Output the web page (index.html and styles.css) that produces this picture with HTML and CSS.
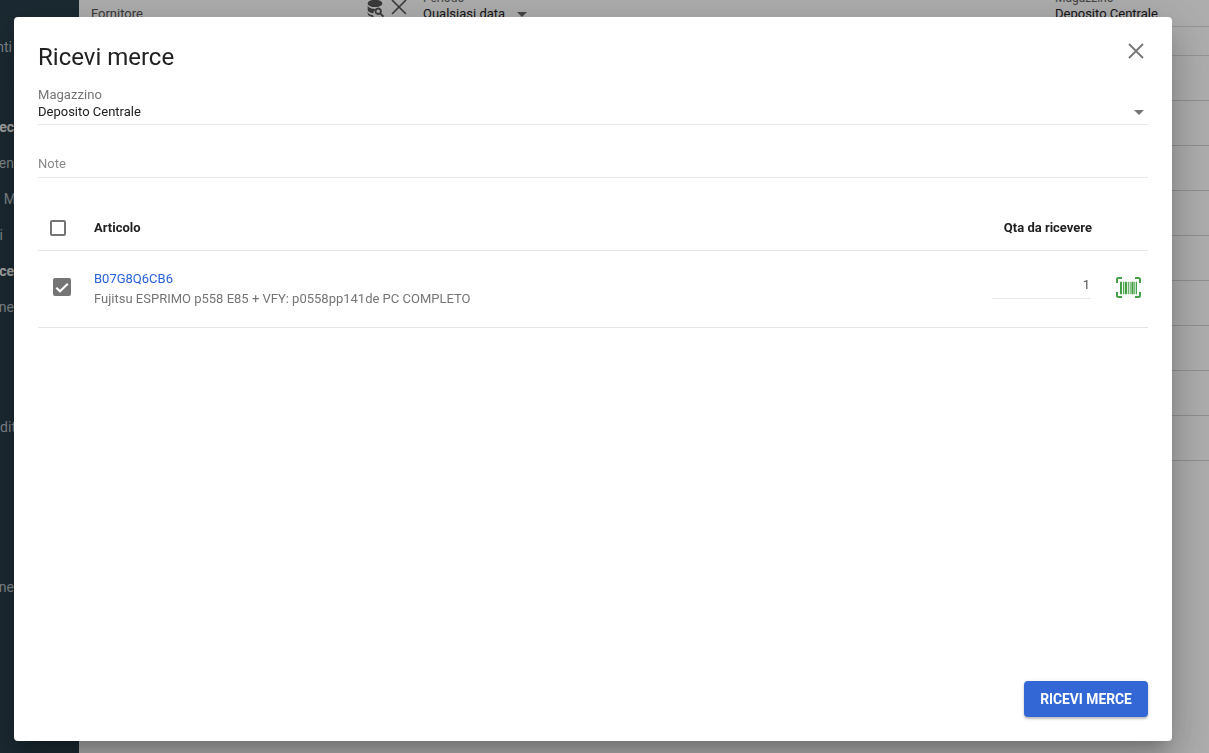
FILE: index.html
```html
<!DOCTYPE html>
<html lang="it">
<head>
<meta charset="utf-8">
<title>Ricevi merce</title>
<link rel="stylesheet" href="styles.css">
</head>
<body>
<div class="app">
  <nav class="sidebar">
    <div class="nav-item first">nti</div>
    <div class="nav-item strong sec">pec</div>
    <div class="nav-item">en</div>
    <div class="nav-item over">M</div>
    <div class="nav-item far">i</div>
    <div class="nav-item strong">ce</div>
    <div class="nav-item">ne</div>
    <div class="nav-item gap-a">dit</div>
    <div class="nav-item gap-b">ne</div>
  </nav>
  <main class="main">
    <div class="filters">
      <div class="filter f-supplier"><span class="placeholder">Fornitore</span></div>
      <div class="filter-icons">
        <svg class="fi-db" viewBox="0 0 24 24" width="22" height="22"><path d="M4 7c0-2.200 3.600-4 8-4s8 1.800 8 4-3.600 4-8 4-8-1.800-8-4zM4 9c0 2.200 3.600 4 8 4 .7 0 1.300 0 2-.1-2.300 1-3.800 2.800-4 5-3.300-.4-6-1.900-6-3.900zM4 16c0 1.900 2.500 3.400 5.900 3.900.2.800.6 1.500 1.100 2.100-3.900-.3-7-2-7-4z"/><path d="M15.500 11.500a4 4 0 0 1 3.400 6.100l3 3-1.400 1.400-3-3a4 4 0 1 1-2-7.500zm0 2a2 2 0 1 0 0 4 2 2 0 0 0 0-4z"/></svg>
        <svg class="fi-x" viewBox="0 0 16 16" width="16" height="16"><path d="M1 1l14 14M15 1L1 15"/></svg>
      </div>
      <div class="filter f-period">
        <span class="mini">Periodo</span>
        <span class="value">Qualsiasi data<i class="caret dark"></i></span>
      </div>
      <div class="filter f-store">
        <span class="mini">Magazzino</span>
        <span class="value">Deposito Centrale</span>
      </div>
    </div>
    <div class="gap-row"></div>
    <div class="row"></div><div class="row"></div><div class="row"></div><div class="row"></div>
    <div class="row"></div><div class="row"></div><div class="row"></div><div class="row"></div>
    <div class="row"></div>
  </main>
</div>

<div class="overlay"></div>

<section class="dialog" role="dialog" aria-label="Ricevi merce">
  <header class="dialog-head">
    <h1>Ricevi merce</h1>
    <button class="close" aria-label="Chiudi">
      <svg viewBox="0 0 16 16" width="16" height="16"><path d="M1 1l14 14M15 1L1 15"/></svg>
    </button>
  </header>

  <div class="field select">
    <label>Magazzino</label>
    <div class="select-value">Deposito Centrale<i class="caret"></i></div>
  </div>
  <div class="field note"><span>Note</span></div>

  <div class="t-head">
    <span class="cb"></span>
    <span class="th-name">Articolo</span>
    <span class="th-qty">Qta da ricevere</span>
  </div>
  <div class="t-row">
    <span class="cb on">
      <svg viewBox="0 0 18 18" width="18" height="18"><path d="M3.300 9.800L7 13.200l7.800-7.400"/></svg>
    </span>
    <div class="item">
      <a class="sku" href="#">B07G8Q6CB6</a>
      <div class="desc">Fujitsu ESPRIMO p558 E85 + VFY: p0558pp141de PC COMPLETO</div>
    </div>
    <div class="qty">1</div>
    <svg class="scan" viewBox="0 0 25 21" width="25" height="21">
      <path class="frame" d="M1 6V2.500A1.500 1.500 0 0 1 2.500 1H6M19 1h3.500A1.500 1.500 0 0 1 24 2.500V6M1 15v3.500A1.500 1.500 0 0 0 2.500 20H6M19 20h3.500a1.500 1.500 0 0 0 1.500-1.500V15"/>
      <path class="bars" d="M4 4.700h2v12.600H4zM7 4.700h.9v12.600H7zM8.700 4.700h2.400v12.600H8.700zM11.900 4.700h.9v12.600h-.9zM13.700 4.700h.9v12.600h-.9zM15.400 4.700h2.200v12.600h-2.200zM18.300 4.700h.8v12.600h-.8zM19.800 4.700H21v12.600h-1.200z"/>
    </svg>
  </div>

  <footer class="dialog-foot">
    <button class="primary">Ricevi merce</button>
  </footer>
</section>
</body>
</html>
```

FILE: styles.css
```css
* { box-sizing: border-box; }
html, body { margin: 0; height: 100%; overflow: hidden; }
body { font-family: Roboto, "Liberation Sans", sans-serif; background: #fff; color: #212121; }

.app { display: flex; height: 753px; }

.sidebar {
  width: 79px;
  flex: none;
  background: #283d4a;
  color: #bcc5cc;
  font-size: 14px;
  overflow: hidden;
}
.nav-item {
  height: 36px;
  line-height: 36px;
  display: flex;
  justify-content: flex-end;
  padding-right: 65px;
  white-space: nowrap;
}
.nav-item.first { margin-top: 29px; padding-right: 67px; }
.nav-item.sec { margin-top: 44px; }
.nav-item.over { padding-right: 63px; }
.nav-item.far { padding-right: 76px; }
.nav-item.gap-a { margin-top: 84px; padding-right: 63px; }
.nav-item.gap-b { margin-top: 124px; }
.nav-item.strong { font-weight: 700; color: #f2f2f2; }

.main { flex: 1; min-width: 0; background: #fff; }

.filters {
  height: 27px;
  display: flex;
  align-items: flex-end;
  border-bottom: 1px solid #dcdcdc;
  overflow: hidden;
  font-size: 13px;
  padding-left: 12px;
}
.filter { display: flex; flex-direction: column; justify-content: flex-end; height: 27px; padding-bottom: 5px; }
.f-supplier { width: 273px; color: #555; }
.filter-icons { width: 59px; display: flex; align-items: flex-start; height: 27px; }
.fi-db { fill: #555; margin-right: 2px; flex: none; margin-top: -2px; }
.fi-x { fill: none; stroke: #555; stroke-width: 1.600; flex: none; margin-left: 3px; }
.f-period { width: 632px; }
.mini { font-size: 12px; line-height: 15px; color: #666; white-space: nowrap; }
.value { line-height: 15px; white-space: nowrap; color: #212121; }
.placeholder { line-height: 15px; }

.gap-row { height: 29px; border-bottom: 1px solid #dcdcdc; }
.row { height: 45px; border-bottom: 1px solid #d4d4d4; }

.caret {
  display: inline-block;
  width: 0;
  height: 0;
  border-left: 5px solid transparent;
  border-right: 5px solid transparent;
  border-top: 5px solid #757575;
}
.caret.dark { margin-left: 12px; vertical-align: 1px; border-top-color: #666; }

.overlay { position: fixed; inset: 0; background: rgba(0, 0, 0, .32); }

.dialog {
  position: fixed;
  left: 14px;
  top: 17px;
  width: 1158px;
  height: 724px;
  background: #fff;
  border-radius: 4px;
  padding: 0 24px;
  display: flex;
  flex-direction: column;
  box-shadow: 0 11px 15px -7px rgba(0,0,0,.2), 0 24px 38px 3px rgba(0,0,0,.14), 0 9px 46px 8px rgba(0,0,0,.12);
}

.dialog-head { display: flex; justify-content: space-between; align-items: flex-start; height: 70px; padding-top: 26px; }
.dialog-head h1 { margin: 0; font-size: 24px; line-height: 28px; font-weight: 400; color: #212121; }
.close { border: 0; background: none; padding: 0; margin: 0 4px 0 0; height: 16px; cursor: pointer; }
.close svg { display: block; fill: none; stroke: #757575; stroke-width: 1.800; }

.field.select { height: 38px; border-bottom: 1px solid #e8e8e8; display: flex; flex-direction: column; }
.field label { font-size: 13px; line-height: 16px; color: #757575; letter-spacing: .05px; }
.select-value { font-size: 13px; line-height: 17px; color: #212121; display: flex; justify-content: space-between; align-items: center; padding-right: 4px; }
.select-value .caret { margin-top: 2px; }

.field.note {
  height: 53px;
  border-bottom: 1px solid #e8e8e8;
  font-size: 13px;
  line-height: 16px;
  color: #8a8a8a;
  display: flex;
  align-items: flex-end;
  padding-bottom: 5px;
}

.t-head {
  height: 73px;
  border-bottom: 1px solid #e4e4e4;
  display: flex;
  align-items: center;
  font-size: 13px;
  font-weight: 700;
  color: #212121;
  padding-left: 12px;
  padding-top: 28px;
}
.cb { width: 16px; height: 16px; border: 2px solid #757575; border-radius: 2px; flex: none; display: block; }
.th-name, .th-qty { position: relative; top: -1px; }
.th-name { margin-left: 28px; flex: 1; }
.th-qty { margin-right: 56px; }

.t-row {
  height: 77px;
  border-bottom: 1px solid #e4e4e4;
  display: flex;
  align-items: center;
  padding-left: 15px;
}
.cb.on { width: 18px; height: 18px; border: 0; background: #757575; margin-right: 23px; margin-bottom: 4px; }
.cb.on svg { display: block; fill: none; stroke: #fff; stroke-width: 2.200; }
.item { flex: 1; margin-bottom: 2px; }
.sku { display: block; font-size: 13px; line-height: 17px; color: #2962d9; text-decoration: none; }
.desc { font-size: 13px; line-height: 15px; margin-top: 4px; color: #757575; }
.qty { width: 99px; height: 25px; line-height: 19px; font-size: 13px; text-align: right; color: #555; border-bottom: 1px solid #e8e8e8; padding: 1px 1px 0 0; margin-bottom: 6px; }
.scan { margin: 0 7px 4px 25px; flex: none; }
.frame { fill: none; stroke: #43a047; stroke-width: 2; }
.bars { fill: #43a047; }

.dialog-foot { margin-top: auto; display: flex; justify-content: flex-end; padding-bottom: 24px; }
.primary {
  width: 124px;
  height: 36px;
  border: 0;
  border-radius: 4px;
  background: #3367d6;
  color: #fff;
  font: 700 13.800px Roboto, "Liberation Sans", sans-serif;
  text-transform: uppercase;
  box-shadow: 0 2px 2px rgba(0,0,0,.2), 0 1px 5px rgba(0,0,0,.1);
}
```
